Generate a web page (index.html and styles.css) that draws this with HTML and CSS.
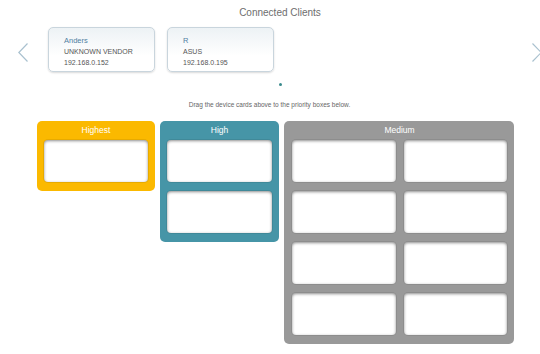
FILE: index.html
```html
<!DOCTYPE html>
<html lang="en">
<head>
    <meta charset="UTF-8">
    <meta name="viewport" content="width=device-width, initial-scale=1.0">
    <title>Client Priority</title>
    <link rel="stylesheet" href="styles.css">
</head>
<body>
    <div class="page">
        <h1 class="title">Connected Clients</h1>

        <div class="carousel">
            <button class="arrow" aria-label="Previous">
                <svg width="10" height="19" viewBox="0 0 10 19"><path d="M9.5 0.5 L0.8 9.5 L9.5 18.5" fill="none" stroke="#a9c1cf" stroke-width="1.2"/></svg>
            </button>
            <div class="cards">
                <div class="card">
                    <div class="card-name">Anders</div>
                    <div>UNKNOWN VENDOR</div>
                    <div>192.168.0.152</div>
                </div>
                <div class="card">
                    <div class="card-name">R</div>
                    <div>ASUS</div>
                    <div>192.168.0.195</div>
                </div>
            </div>
            <button class="arrow next" aria-label="Next">
                <svg width="10" height="19" viewBox="0 0 10 19"><path d="M0.5 0.5 L9.2 9.5 L0.5 18.5" fill="none" stroke="#a9c1cf" stroke-width="1.2"/></svg>
            </button>
        </div>

        <div class="dots"><span class="dot"></span></div>

        <p class="hint">Drag the device cards above to the priority boxes below.</p>

        <div class="priorities">
            <div class="box highest">
                <div class="box-title">Highest</div>
                <div class="slots">
                    <div class="slot"></div>
                </div>
            </div>
            <div class="box high">
                <div class="box-title">High</div>
                <div class="slots">
                    <div class="slot"></div>
                    <div class="slot"></div>
                </div>
            </div>
            <div class="box medium">
                <div class="box-title">Medium</div>
                <div class="slots">
                    <div class="slot"></div>
                    <div class="slot"></div>
                    <div class="slot"></div>
                    <div class="slot"></div>
                    <div class="slot"></div>
                    <div class="slot"></div>
                    <div class="slot"></div>
                    <div class="slot"></div>
                </div>
            </div>
        </div>
    </div>
</body>
</html>
```

FILE: styles.css
```css
body {
    margin: 0;
    overflow: hidden;
    background-color: #fff;
    font-family: "Liberation Sans", Arial, sans-serif;
}

.page {
    width: 560px;
}

.title {
    margin: 0;
    padding-top: 6px;
    font-size: 10px;
    line-height: 14px;
    font-weight: normal;
    text-align: center;
    color: #6e6e6e;
}

.carousel {
    display: flex;
    align-items: center;
    height: 45px;
    margin-top: 7px;
    padding: 0 18px;
}

.arrow {
    width: 10px;
    height: 19px;
    margin-top: 6px;
    padding: 0;
    border: none;
    background: none;
}

.arrow svg {
    display: block;
}

.arrow.next {
    margin-left: auto;
}

.cards {
    display: flex;
    gap: 12px;
    margin-left: 20px;
}

.card {
    box-sizing: border-box;
    width: 107px;
    height: 45px;
    padding: 7px 0 0 15px;
    border: 1px solid #c9d5dd;
    border-radius: 5px;
    background: linear-gradient(#edf2f5, #fff 65%);
    box-shadow: 0 1px 2px rgba(0, 0, 0, 0.15);
    font-size: 7px;
    line-height: 11px;
    color: #555;
}

.card-name {
    font-size: 7.5px;
    color: #4f7fa3;
}

.dots {
    display: flex;
    justify-content: center;
    margin-top: 11px;
}

.dot {
    width: 3px;
    height: 3px;
    border-radius: 50%;
    background-color: #3a8a8c;
}

.hint {
    margin: 14px 0 0;
    padding-right: 21px;
    font-size: 6.5px;
    line-height: 10px;
    text-align: center;
    color: #666;
}

.priorities {
    display: flex;
    align-items: flex-start;
    gap: 5px;
    margin-top: 11px;
    padding-left: 37px;
}

.box {
    box-sizing: border-box;
    width: 118px;
    padding: 0 7px 9px;
    border-radius: 5px;
}

.box-title {
    height: 19px;
    font-size: 8.5px;
    line-height: 18px;
    text-align: center;
    color: #fff;
}

.slots {
    display: grid;
    gap: 9px;
}

.slot {
    height: 42px;
    border-radius: 4px;
    background-color: #fff;
    box-shadow: inset 0 1px 3px rgba(0, 0, 0, 0.45), 0 0 0 1px rgba(0, 0, 0, 0.08);
}

.highest {
    background-color: #fbb900;
}

.high {
    width: 119px;
    background-color: #4695a7;
}

.medium {
    width: 230px;
    padding-left: 8px;
    background-color: #999;
}

.medium .slots {
    grid-template-columns: 1fr 1fr;
    column-gap: 8px;
}
```
